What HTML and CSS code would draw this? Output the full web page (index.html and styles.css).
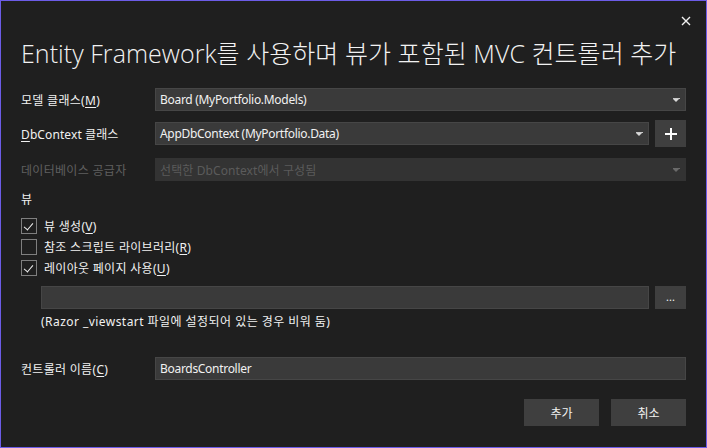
FILE: index.html
```html
<!DOCTYPE html>
<html lang="ko">
<head>
<meta charset="utf-8">
<title>MVC 컨트롤러 추가</title>
<link rel="stylesheet" href="styles.css">
</head>
<body>
<div class="dialog">
  <div class="titlebar">
    <button class="close" aria-label="닫기">
      <svg width="10" height="10" viewBox="0 0 10 10"><path d="M1 1 L9 9 M9 1 L1 9" stroke="#f0f0f0" stroke-width="1.4" fill="none"/></svg>
    </button>
  </div>
  <h1 class="title">Entity Framework를 사용하며 뷰가 포함된 MVC 컨트롤러 추가</h1>

  <div class="row row1">
    <label class="label">모델 클래스(<u>M</u>)</label>
    <div class="select">
      <span class="value">Board (MyPortfolio.Models)</span>
      <span class="arrow"></span>
    </div>
  </div>

  <div class="row row2">
    <label class="label mixed"><u>D</u>bContext 클래스</label>
    <div class="select short">
      <span class="value">AppDbContext (MyPortfolio.Data)</span>
      <span class="arrow"></span>
    </div>
    <button class="btn square plus">
      <svg width="12" height="12" viewBox="0 0 12 12"><path d="M6 0 V12 M0 6 H12" stroke="#ffffff" stroke-width="2" fill="none"/></svg>
    </button>
  </div>

  <div class="row row3">
    <label class="label disabled">데이터베이스 공급자</label>
    <div class="select disabled-select">
      <span class="value placeholder">선택한 DbContext에서 구성됨</span>
      <span class="arrow dim"></span>
    </div>
  </div>

  <div class="section">뷰</div>

  <div class="checks">
    <label class="check"><span class="box checked"></span><span>뷰 생성(<u>V</u>)</span></label>
    <label class="check"><span class="box"></span><span>참조 스크립트 라이브러리(<u>R</u>)</span></label>
    <label class="check"><span class="box checked"></span><span>레이아웃 페이지 사용(<u>U</u>)</span></label>
  </div>

  <div class="layout-row">
    <div class="input wide"></div>
    <button class="btn square dots">...</button>
  </div>
  <div class="hint">(Razor _viewstart 파일에 설정되어 있는 경우 비워 둠)</div>

  <div class="row row4">
    <label class="label">컨트롤러 이름(<u>C</u>)</label>
    <div class="input"><span class="value">BoardsController</span></div>
  </div>

  <div class="actions">
    <button class="btn action">추가</button>
    <button class="btn action">취소</button>
  </div>
</div>
</body>
</html>
```

FILE: styles.css
```css
* { box-sizing: border-box; }
html, body { margin: 0; padding: 0; background: #1f1f1f; }
body {
  font-family: "Segoe UI", "Noto Sans", "Noto Sans CJK KR", sans-serif;
  font-size: 12px;
  color: #f1f1f1;
  letter-spacing: 0.3px;
}
.dialog {
  width: 707px;
  height: 448px;
  border: 1px solid #6c5ce7;
  background: #1f1f1f;
  padding: 0 20px 0 20px;
  display: flex;
  flex-direction: column;
}
.titlebar {
  height: 35px;
  display: flex;
  justify-content: flex-end;
  align-items: flex-end;
  margin-right: -5px;
}
.close {
  background: none;
  border: 0;
  padding: 0;
  width: 10px;
  height: 10px;
  display: flex;
  margin-bottom: 10px;
}
.title {
  margin: 0;
  font-family: "Open Sans", "Noto Sans CJK KR", sans-serif;
  font-weight: 300;
  font-size: 25px;
  line-height: 32px;
  height: 32px;
  color: #f2f2f2;
  white-space: nowrap;
  letter-spacing: 0.05px;
  margin-top: 1px;
}
u { text-decoration-thickness: 1px; text-underline-offset: 2px; }
.row {
  display: flex;
  align-items: center;
}
.label {
  width: 134px;
  flex: none;
  color: #f1f1f1;
}
.label.mixed { letter-spacing: 0.1px; }
.label.disabled { color: #5f5f5f; }
.row1 { margin-top: 19px; height: 23px; }
.row2 { margin-top: 9px; height: 27px; }
.row3 { margin-top: 11px; height: 23px; }
.select, .input {
  flex: 1;
  height: 23px;
  background: #3a3a3a;
  border: 1px solid #464646;
  display: flex;
  align-items: center;
  padding: 0 4px;
}
.select.short { flex: none; width: 494px; }
.disabled-select { background: #333333; border-color: #333333; }
.value { flex: 1; white-space: nowrap; letter-spacing: -0.3px; }
.placeholder { color: #5b5b5b; letter-spacing: 0.1px; }
.arrow {
  width: 7px;
  height: 4px;
  margin-right: 1px;
  border-top: 1px solid #c8c8c8;
  position: relative;
}
.arrow::after {
  content: "";
  position: absolute;
  left: 0;
  top: 0;
  border-left: 3.5px solid transparent;
  border-right: 3.5px solid transparent;
  border-top: 3px solid #d8d8d8;
}
.arrow.dim { border-top-color: #6a6a6a; }
.arrow.dim::after { border-top-color: #6a6a6a; }
.btn {
  background: #3f3f3f;
  border: 0;
  color: #f1f1f1;
  font: inherit;
  padding: 0;
  display: flex;
  align-items: center;
  justify-content: center;
}
.square.plus { width: 32px; height: 27px; margin-left: 6px; }
.section { margin-top: 11px; height: 16px; line-height: 16px; }
.checks {
  margin-top: 10px;
  display: flex;
  flex-direction: column;
  gap: 5px;
}
.check {
  display: flex;
  align-items: center;
  gap: 7px;
  height: 16px;
}
.box {
  width: 16px;
  height: 16px;
  border: 1px solid #7f7f7f;
  background: #1f1f1f;
  position: relative;
}
.box.checked::after {
  content: "";
  position: absolute;
  left: 4px;
  top: 2px;
  width: 4px;
  height: 8px;
  border-right: 1.5px solid #f0f0f0;
  border-bottom: 1.5px solid #f0f0f0;
  transform: rotate(40deg);
}
.layout-row {
  margin-top: 10px;
  margin-left: 20px;
  display: flex;
  height: 23px;
}
.input.wide { flex: none; width: 608px; }
.square.dots { width: 31px; height: 23px; margin-left: 6px; font-size: 11px; padding-bottom: 2px; letter-spacing: 0; }
.hint { margin-left: 20px; margin-top: 5px; height: 16px; line-height: 16px; letter-spacing: 0.45px; }
.row4 { margin-top: 27px; height: 23px; }
.actions {
  margin-top: 19px;
  display: flex;
  justify-content: flex-end;
  gap: 12px;
}
.action { width: 75px; height: 27px; }
```
